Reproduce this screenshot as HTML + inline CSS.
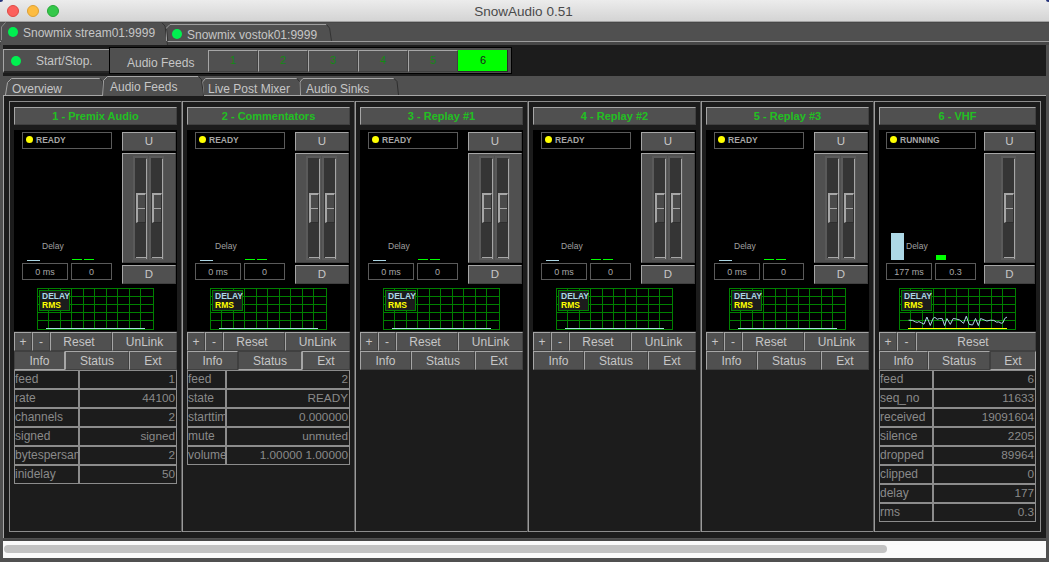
<!DOCTYPE html>
<html><head><meta charset="utf-8"><style>
html,body{margin:0;padding:0;width:1049px;height:562px;overflow:hidden;background:#505050;font-family:"Liberation Sans",sans-serif}
body>div,body>svg{position:absolute}
.t{white-space:nowrap;line-height:1.15}
</style></head><body>
<div style="left:0;top:0;width:1049px;height:22px;background:linear-gradient(#ececec,#d4d4d4);border-bottom:1px solid #a0a0a0;box-sizing:border-box"></div>
<div class="t" style="left:0px;width:1047px;text-align:center;top:4px;font-size:13.5px;color:#4a4a4a;font-weight:normal;">SnowAudio 0.51</div>
<div style="left:7px;top:5px;width:12px;height:12px;border-radius:50%;background:#fc605c;box-sizing:border-box;border:0.5px solid #de4a44"></div>
<div style="left:27px;top:5px;width:12px;height:12px;border-radius:50%;background:#fdbc40;box-sizing:border-box;border:0.5px solid #dea033"></div>
<div style="left:47px;top:5px;width:12px;height:12px;border-radius:50%;background:#34c84a;box-sizing:border-box;border:0.5px solid #27a737"></div>
<div style="left:-2px;top:-2px;width:5px;height:4px;border-radius:50%;background:#24327a;filter:blur(0.6px)"></div>
<div style="left:1046px;top:-2px;width:5px;height:4px;border-radius:50%;background:#24327a;filter:blur(0.6px)"></div>
<div style="left:0px;top:22px;width:1049px;height:1px;background:#474747"></div>
<div style="left:0px;top:41px;width:1049px;height:1px;background:#9c9c9c"></div>
<div style="left:0px;top:42px;width:1049px;height:3px;background:#474747"></div>
<div style="left:1px;top:23px;width:166px;height:22px;background:#505050"></div>
<svg width="1049" height="50" style="position:absolute;left:0;top:0"><path d="M1.5,40 L1.5,27 L5.5,22.5" fill="none" stroke="#8a8a8a" stroke-width="1"/><path d="M162,22.8 L165,26 L167.5,45" fill="none" stroke="#333" stroke-width="1"/><path d="M166.5,41 L166.5,28 L170,24.5 L326.5,24.5" fill="none" stroke="#a0a0a0" stroke-width="1"/><path d="M166.5,28.5 L167.8,41" fill="none" stroke="#333" stroke-width="1"/><path d="M326.5,24.5 L329.6,28.2 L331.5,41" fill="none" stroke="#333" stroke-width="1"/></svg>
<div style="left:172.0px;top:29.0px;width:10px;height:10px;border-radius:50%;background:#00f050"></div>
<div class="t" style="left:187px;top:29px;font-size:12px;color:#c6c6c6;font-weight:normal;">Snowmix vostok01:9999</div>
<div style="left:8.0px;top:27.0px;width:10px;height:10px;border-radius:50%;background:#00f050"></div>
<div class="t" style="left:23px;top:27px;font-size:12px;color:#c6c6c6;font-weight:normal;">Snowmix stream01:9999</div>
<div style="left:3px;top:45px;width:1043px;height:31px;background:#1c1c1c"></div>
<div style="left:3px;top:49px;width:106px;height:24px;background:#505050;border-top:1px solid #a6a6a6;border-left:1px solid #a6a6a6;border-bottom:2px solid #262626;box-sizing:border-box"></div>
<div style="left:11.0px;top:56.0px;width:10px;height:10px;border-radius:50%;background:#00f050"></div>
<div class="t" style="left:36px;top:55px;font-size:12px;color:#c6c6c6;font-weight:normal;">Start/Stop.</div>
<div style="left:109px;top:47px;width:403px;height:27px;background:#505050;border:1px solid #000;box-sizing:border-box"></div>
<div class="t" style="left:127px;top:57px;font-size:12px;color:#c6c6c6;font-weight:normal;">Audio Feeds</div>
<div style="left:208px;top:50px;width:50px;height:22px;background:#505050;border-top:1px solid #a6a6a6;border-left:1px solid #a6a6a6;border-right:1px solid #404040;border-bottom:1px solid #404040;box-sizing:border-box;"></div>
<div class="t" style="left:208px;width:50px;text-align:center;top:54px;font-size:11px;color:#138a13;font-weight:normal;">1</div>
<div style="left:258px;top:50px;width:50px;height:22px;background:#505050;border-top:1px solid #a6a6a6;border-left:1px solid #a6a6a6;border-right:1px solid #404040;border-bottom:1px solid #404040;box-sizing:border-box;"></div>
<div class="t" style="left:258px;width:50px;text-align:center;top:54px;font-size:11px;color:#138a13;font-weight:normal;">2</div>
<div style="left:308px;top:50px;width:50px;height:22px;background:#505050;border-top:1px solid #a6a6a6;border-left:1px solid #a6a6a6;border-right:1px solid #404040;border-bottom:1px solid #404040;box-sizing:border-box;"></div>
<div class="t" style="left:308px;width:50px;text-align:center;top:54px;font-size:11px;color:#138a13;font-weight:normal;">3</div>
<div style="left:358px;top:50px;width:50px;height:22px;background:#505050;border-top:1px solid #a6a6a6;border-left:1px solid #a6a6a6;border-right:1px solid #404040;border-bottom:1px solid #404040;box-sizing:border-box;"></div>
<div class="t" style="left:358px;width:50px;text-align:center;top:54px;font-size:11px;color:#138a13;font-weight:normal;">4</div>
<div style="left:408px;top:50px;width:50px;height:22px;background:#505050;border-top:1px solid #a6a6a6;border-left:1px solid #a6a6a6;border-right:1px solid #404040;border-bottom:1px solid #404040;box-sizing:border-box;"></div>
<div class="t" style="left:408px;width:50px;text-align:center;top:54px;font-size:11px;color:#138a13;font-weight:normal;">5</div>
<div style="left:458px;top:50px;width:50px;height:22px;background:#00ff00;border-bottom:1px solid #2a2a2a;border-right:1px solid #2a2a2a;box-sizing:border-box"></div>
<div class="t" style="left:458px;width:50px;text-align:center;top:54px;font-size:11px;color:#1a1a1a;font-weight:normal;">6</div>
<div style="left:3px;top:95px;width:99px;height:1px;background:#a6a6a6"></div>
<div style="left:203px;top:95px;width:843px;height:1px;background:#a6a6a6"></div>
<svg width="1049" height="100" style="position:absolute;left:0;top:0"><path d="M5.5,95 L7.5,82.5 L11.5,78.5 L100,78.5" fill="none" stroke="#a6a6a6" stroke-width="1"/><path d="M100,78.5 L102.5,81.5 L102.5,95" fill="none" stroke="#2e2e2e" stroke-width="1"/><path d="M203.5,95 L202.5,82 L205.5,78.5 L297,78.5" fill="none" stroke="#a6a6a6" stroke-width="1"/><path d="M297,78.5 L299.5,81.5 L300.5,95" fill="none" stroke="#2e2e2e" stroke-width="1"/><path d="M300.5,95 L300,82 L303,78.5 L394,78.5" fill="none" stroke="#a6a6a6" stroke-width="1"/><path d="M394,78.5 L397,81.5 L398.5,95" fill="none" stroke="#2e2e2e" stroke-width="1"/><path d="M102.5,96 L103.5,80.5 L107.5,76.5 L198.5,76.5" fill="none" stroke="#a6a6a6" stroke-width="1"/><path d="M198.5,76.5 L201.5,79.5 L203.5,96" fill="none" stroke="#2e2e2e" stroke-width="1"/></svg>
<div class="t" style="left:12px;top:83px;font-size:12px;color:#c6c6c6;font-weight:normal;">Overview</div>
<div class="t" style="left:208px;top:83px;font-size:12px;color:#c6c6c6;font-weight:normal;">Live Post Mixer</div>
<div class="t" style="left:306px;top:83px;font-size:12px;color:#c6c6c6;font-weight:normal;">Audio Sinks</div>
<div class="t" style="left:110px;top:81px;font-size:12px;color:#c6c6c6;font-weight:normal;">Audio Feeds</div>
<div style="left:3px;top:96px;width:1043px;height:442px;background:#1c1c1c;border-left:1px solid #a6a6a6;box-sizing:border-box"></div>
<div style="left:9px;top:101px;width:1032px;height:431px;border:1px solid #8c8c8c;box-sizing:border-box"></div>
<div style="left:181px;top:101px;width:1px;height:431px;background:#5a5a5a"></div>
<div style="left:182px;top:101px;width:1px;height:431px;background:#9a9a9a"></div>
<div style="left:354px;top:101px;width:1px;height:431px;background:#5a5a5a"></div>
<div style="left:355px;top:101px;width:1px;height:431px;background:#9a9a9a"></div>
<div style="left:527px;top:101px;width:1px;height:431px;background:#5a5a5a"></div>
<div style="left:528px;top:101px;width:1px;height:431px;background:#9a9a9a"></div>
<div style="left:700px;top:101px;width:1px;height:431px;background:#5a5a5a"></div>
<div style="left:701px;top:101px;width:1px;height:431px;background:#9a9a9a"></div>
<div style="left:873px;top:101px;width:1px;height:431px;background:#5a5a5a"></div>
<div style="left:874px;top:101px;width:1px;height:431px;background:#9a9a9a"></div>
<div style="left:14px;top:107px;width:163px;height:18px;background:#505050;border-top:1px solid #a6a6a6;border-left:1px solid #a6a6a6;border-right:1px solid #404040;border-bottom:1px solid #404040;box-sizing:border-box;"></div>
<div class="t" style="left:14px;width:163px;text-align:center;top:110px;font-size:11px;color:#22c022;font-weight:bold;">1 - Premix Audio</div>
<div style="left:14px;top:130px;width:163px;height:201px;background:#000"></div>
<div style="left:22px;top:132px;width:90px;height:17px;border:1px solid #5a5a5a;box-sizing:border-box"></div>
<div style="left:26.0px;top:136.3px;width:7px;height:7px;border-radius:50%;background:#ffff00"></div>
<div class="t" style="left:36px;top:136px;font-size:8.5px;color:#a6a6a6;font-weight:bold;">READY</div>
<div style="left:122px;top:132px;width:54px;height:19px;background:#505050;border-top:1px solid #a6a6a6;border-left:1px solid #a6a6a6;border-right:1px solid #404040;border-bottom:1px solid #404040;box-sizing:border-box;"></div>
<div class="t" style="left:122px;width:54px;text-align:center;top:135px;font-size:11.5px;color:#c6c6c6;font-weight:normal;">U</div>
<div style="left:122px;top:153px;width:54px;height:110px;background:#505050;border-top:1px solid #a6a6a6;border-left:1px solid #a6a6a6;border-right:1px solid #404040;border-bottom:1px solid #404040;box-sizing:border-box;"></div>
<div style="left:122px;top:265px;width:54px;height:19px;background:#505050;border-top:1px solid #a6a6a6;border-left:1px solid #a6a6a6;border-right:1px solid #404040;border-bottom:1px solid #404040;box-sizing:border-box;"></div>
<div class="t" style="left:122px;width:54px;text-align:center;top:268px;font-size:11.5px;color:#c6c6c6;font-weight:normal;">D</div>
<div style="left:133px;top:156px;width:15px;height:104px;border:2px solid #5a5a5a;box-sizing:border-box;background:#4c4c4c"></div>
<div style="left:135px;top:158px;width:11px;height:100px;background:#353535"></div>
<div style="left:146px;top:159px;width:1px;height:100px;background:#a6a6a6"></div>
<div style="left:136px;top:257px;width:11px;height:1px;background:#a6a6a6"></div>
<div style="left:136px;top:193px;width:10px;height:30px;background:#4a4a4a;border-left:2px solid #a6a6a6;border-top:2px solid #a6a6a6;border-right:1px solid #2e2e2e;border-bottom:1px solid #2e2e2e;box-sizing:border-box"></div>
<div style="left:138px;top:208px;width:7px;height:1px;background:#a6a6a6"></div>
<div style="left:149px;top:156px;width:15px;height:104px;border:2px solid #5a5a5a;box-sizing:border-box;background:#4c4c4c"></div>
<div style="left:151px;top:158px;width:11px;height:100px;background:#353535"></div>
<div style="left:162px;top:159px;width:1px;height:100px;background:#a6a6a6"></div>
<div style="left:152px;top:257px;width:11px;height:1px;background:#a6a6a6"></div>
<div style="left:152px;top:193px;width:10px;height:30px;background:#4a4a4a;border-left:2px solid #a6a6a6;border-top:2px solid #a6a6a6;border-right:1px solid #2e2e2e;border-bottom:1px solid #2e2e2e;box-sizing:border-box"></div>
<div style="left:154px;top:208px;width:7px;height:1px;background:#a6a6a6"></div>
<div class="t" style="left:42px;top:242px;font-size:8.5px;color:#a0a0a0;font-weight:normal;">Delay</div>
<div style="left:22px;top:263px;width:46px;height:17px;border:1px solid #5a5a5a;box-sizing:border-box"></div>
<div class="t" style="left:22px;width:46px;text-align:center;top:267px;font-size:9px;color:#a8a8a8;font-weight:normal;">0 ms</div>
<div style="left:71px;top:263px;width:41px;height:17px;border:1px solid #5a5a5a;box-sizing:border-box"></div>
<div class="t" style="left:71px;width:41px;text-align:center;top:267px;font-size:9px;color:#a8a8a8;font-weight:normal;">0</div>
<div style="left:27px;top:260px;width:13px;height:1px;background:#add8e6"></div>
<div style="left:72px;top:259px;width:10px;height:1px;background:#00ff00"></div>
<div style="left:84px;top:259px;width:10px;height:1px;background:#00ff00"></div>
<svg width="1049" height="562" style="position:absolute;left:0;top:0" shape-rendering="crispEdges"><rect x="37" y="288" width="1" height="42" fill="#008000"/><rect x="48" y="288" width="1" height="42" fill="#008000"/><rect x="60" y="288" width="1" height="42" fill="#008000"/><rect x="71" y="288" width="1" height="42" fill="#008000"/><rect x="83" y="288" width="1" height="42" fill="#008000"/><rect x="94" y="288" width="1" height="42" fill="#008000"/><rect x="106" y="288" width="1" height="42" fill="#008000"/><rect x="117" y="288" width="1" height="42" fill="#008000"/><rect x="129" y="288" width="1" height="42" fill="#008000"/><rect x="140" y="288" width="1" height="42" fill="#008000"/><rect x="153" y="288" width="1" height="42" fill="#008000"/><rect x="37" y="288" width="117" height="1" fill="#008000"/><rect x="37" y="296" width="117" height="1" fill="#008000"/><rect x="37" y="304" width="117" height="1" fill="#008000"/><rect x="37" y="312" width="117" height="1" fill="#008000"/><rect x="37" y="320" width="117" height="1" fill="#008000"/><rect x="37" y="329" width="117" height="1" fill="#008000"/><rect x="39" y="290" width="31" height="21" fill="#1c1c1c"/><rect x="39" y="290" width="31" height="1" fill="#008000"/><rect x="39" y="290" width="1" height="21" fill="#008000"/><rect x="69" y="290" width="1" height="21" fill="#008000"/><rect x="39" y="310" width="31" height="1" fill="#008000"/><rect x="46" y="328" width="99" height="1" fill="#add8e6"/></svg>
<div class="t" style="left:42px;top:292px;font-size:8.5px;color:#add8e6;font-weight:bold;">DELAY</div>
<div class="t" style="left:42px;top:301px;font-size:8.5px;color:#ffff00;font-weight:bold;">RMS</div>
<div style="left:14px;top:332px;width:18px;height:19px;background:#505050;border-top:1px solid #a6a6a6;border-left:1px solid #a6a6a6;border-right:1px solid #404040;border-bottom:1px solid #404040;box-sizing:border-box;"></div>
<div class="t" style="left:14px;width:18px;text-align:center;top:336px;font-size:12px;color:#c6c6c6;font-weight:normal;">+</div>
<div style="left:32px;top:332px;width:18px;height:19px;background:#505050;border-top:1px solid #a6a6a6;border-left:1px solid #a6a6a6;border-right:1px solid #404040;border-bottom:1px solid #404040;box-sizing:border-box;"></div>
<div class="t" style="left:32px;width:18px;text-align:center;top:336px;font-size:12px;color:#c6c6c6;font-weight:normal;">-</div>
<div style="left:50px;top:332px;width:62px;height:19px;background:#505050;border-top:1px solid #a6a6a6;border-left:1px solid #a6a6a6;border-right:1px solid #404040;border-bottom:1px solid #404040;box-sizing:border-box;"></div>
<div class="t" style="left:48px;width:62px;text-align:center;top:336px;font-size:12px;color:#c6c6c6;font-weight:normal;">Reset</div>
<div style="left:112px;top:332px;width:65px;height:19px;background:#505050;border-top:1px solid #a6a6a6;border-left:1px solid #a6a6a6;border-right:1px solid #404040;border-bottom:1px solid #404040;box-sizing:border-box;"></div>
<div class="t" style="left:112px;width:65px;text-align:center;top:336px;font-size:12px;color:#c6c6c6;font-weight:normal;">UnLink</div>
<div style="left:14px;top:351px;width:51px;height:19px;background:#505050;border-bottom:1px solid #a6a6a6;border-right:1px solid #a6a6a6;border-top:1px solid #404040;border-left:1px solid #404040;box-sizing:border-box;"></div>
<div class="t" style="left:14px;width:51px;text-align:center;top:355px;font-size:12px;color:#c6c6c6;font-weight:normal;">Info</div>
<div style="left:65px;top:351px;width:64px;height:19px;background:#505050;border-top:1px solid #a6a6a6;border-left:1px solid #a6a6a6;border-right:1px solid #404040;border-bottom:1px solid #404040;box-sizing:border-box;"></div>
<div class="t" style="left:65px;width:64px;text-align:center;top:355px;font-size:12px;color:#c6c6c6;font-weight:normal;">Status</div>
<div style="left:129px;top:351px;width:48px;height:19px;background:#505050;border-top:1px solid #a6a6a6;border-left:1px solid #a6a6a6;border-right:1px solid #404040;border-bottom:1px solid #404040;box-sizing:border-box;"></div>
<div class="t" style="left:129px;width:48px;text-align:center;top:355px;font-size:12px;color:#c6c6c6;font-weight:normal;">Ext</div>
<div style="left:14px;top:370px;width:65px;height:19px;background:#1c1c1c;border:1px solid #8c8c8c;box-sizing:border-box"></div>
<div class="t" style="left:15px;top:373px;width:63px;overflow:hidden;font-size:12px;color:#8a8a8a">feed</div>
<div style="left:79px;top:370px;width:98px;height:19px;background:#1c1c1c;border:1px solid #8c8c8c;box-sizing:border-box"></div>
<div class="t" style="right:874px;top:372px;font-size:11.75px;color:#8a8a8a;font-weight:normal;">1</div>
<div style="left:14px;top:389px;width:65px;height:19px;background:#1c1c1c;border:1px solid #8c8c8c;box-sizing:border-box"></div>
<div class="t" style="left:15px;top:392px;width:63px;overflow:hidden;font-size:12px;color:#8a8a8a">rate</div>
<div style="left:79px;top:389px;width:98px;height:19px;background:#1c1c1c;border:1px solid #8c8c8c;box-sizing:border-box"></div>
<div class="t" style="right:874px;top:391px;font-size:11.75px;color:#8a8a8a;font-weight:normal;">44100</div>
<div style="left:14px;top:408px;width:65px;height:19px;background:#1c1c1c;border:1px solid #8c8c8c;box-sizing:border-box"></div>
<div class="t" style="left:15px;top:411px;width:63px;overflow:hidden;font-size:12px;color:#8a8a8a">channels</div>
<div style="left:79px;top:408px;width:98px;height:19px;background:#1c1c1c;border:1px solid #8c8c8c;box-sizing:border-box"></div>
<div class="t" style="right:874px;top:410px;font-size:11.75px;color:#8a8a8a;font-weight:normal;">2</div>
<div style="left:14px;top:427px;width:65px;height:19px;background:#1c1c1c;border:1px solid #8c8c8c;box-sizing:border-box"></div>
<div class="t" style="left:15px;top:430px;width:63px;overflow:hidden;font-size:12px;color:#8a8a8a">signed</div>
<div style="left:79px;top:427px;width:98px;height:19px;background:#1c1c1c;border:1px solid #8c8c8c;box-sizing:border-box"></div>
<div class="t" style="right:874px;top:429px;font-size:11.75px;color:#8a8a8a;font-weight:normal;">signed</div>
<div style="left:14px;top:446px;width:65px;height:19px;background:#1c1c1c;border:1px solid #8c8c8c;box-sizing:border-box"></div>
<div class="t" style="left:15px;top:449px;width:63px;overflow:hidden;font-size:12px;color:#8a8a8a">bytespersample</div>
<div style="left:79px;top:446px;width:98px;height:19px;background:#1c1c1c;border:1px solid #8c8c8c;box-sizing:border-box"></div>
<div class="t" style="right:874px;top:448px;font-size:11.75px;color:#8a8a8a;font-weight:normal;">2</div>
<div style="left:14px;top:465px;width:65px;height:19px;background:#1c1c1c;border:1px solid #8c8c8c;box-sizing:border-box"></div>
<div class="t" style="left:15px;top:468px;width:63px;overflow:hidden;font-size:12px;color:#8a8a8a">inidelay</div>
<div style="left:79px;top:465px;width:98px;height:19px;background:#1c1c1c;border:1px solid #8c8c8c;box-sizing:border-box"></div>
<div class="t" style="right:874px;top:467px;font-size:11.75px;color:#8a8a8a;font-weight:normal;">50</div>
<div style="left:187px;top:107px;width:163px;height:18px;background:#505050;border-top:1px solid #a6a6a6;border-left:1px solid #a6a6a6;border-right:1px solid #404040;border-bottom:1px solid #404040;box-sizing:border-box;"></div>
<div class="t" style="left:187px;width:163px;text-align:center;top:110px;font-size:11px;color:#22c022;font-weight:bold;">2 - Commentators</div>
<div style="left:187px;top:130px;width:163px;height:201px;background:#000"></div>
<div style="left:195px;top:132px;width:90px;height:17px;border:1px solid #5a5a5a;box-sizing:border-box"></div>
<div style="left:199.0px;top:136.3px;width:7px;height:7px;border-radius:50%;background:#ffff00"></div>
<div class="t" style="left:209px;top:136px;font-size:8.5px;color:#a6a6a6;font-weight:bold;">READY</div>
<div style="left:295px;top:132px;width:54px;height:19px;background:#505050;border-top:1px solid #a6a6a6;border-left:1px solid #a6a6a6;border-right:1px solid #404040;border-bottom:1px solid #404040;box-sizing:border-box;"></div>
<div class="t" style="left:295px;width:54px;text-align:center;top:135px;font-size:11.5px;color:#c6c6c6;font-weight:normal;">U</div>
<div style="left:295px;top:153px;width:54px;height:110px;background:#505050;border-top:1px solid #a6a6a6;border-left:1px solid #a6a6a6;border-right:1px solid #404040;border-bottom:1px solid #404040;box-sizing:border-box;"></div>
<div style="left:295px;top:265px;width:54px;height:19px;background:#505050;border-top:1px solid #a6a6a6;border-left:1px solid #a6a6a6;border-right:1px solid #404040;border-bottom:1px solid #404040;box-sizing:border-box;"></div>
<div class="t" style="left:295px;width:54px;text-align:center;top:268px;font-size:11.5px;color:#c6c6c6;font-weight:normal;">D</div>
<div style="left:306px;top:156px;width:15px;height:104px;border:2px solid #5a5a5a;box-sizing:border-box;background:#4c4c4c"></div>
<div style="left:308px;top:158px;width:11px;height:100px;background:#353535"></div>
<div style="left:319px;top:159px;width:1px;height:100px;background:#a6a6a6"></div>
<div style="left:309px;top:257px;width:11px;height:1px;background:#a6a6a6"></div>
<div style="left:309px;top:193px;width:10px;height:30px;background:#4a4a4a;border-left:2px solid #a6a6a6;border-top:2px solid #a6a6a6;border-right:1px solid #2e2e2e;border-bottom:1px solid #2e2e2e;box-sizing:border-box"></div>
<div style="left:311px;top:208px;width:7px;height:1px;background:#a6a6a6"></div>
<div style="left:322px;top:156px;width:15px;height:104px;border:2px solid #5a5a5a;box-sizing:border-box;background:#4c4c4c"></div>
<div style="left:324px;top:158px;width:11px;height:100px;background:#353535"></div>
<div style="left:335px;top:159px;width:1px;height:100px;background:#a6a6a6"></div>
<div style="left:325px;top:257px;width:11px;height:1px;background:#a6a6a6"></div>
<div style="left:325px;top:193px;width:10px;height:30px;background:#4a4a4a;border-left:2px solid #a6a6a6;border-top:2px solid #a6a6a6;border-right:1px solid #2e2e2e;border-bottom:1px solid #2e2e2e;box-sizing:border-box"></div>
<div style="left:327px;top:208px;width:7px;height:1px;background:#a6a6a6"></div>
<div class="t" style="left:215px;top:242px;font-size:8.5px;color:#a0a0a0;font-weight:normal;">Delay</div>
<div style="left:195px;top:263px;width:46px;height:17px;border:1px solid #5a5a5a;box-sizing:border-box"></div>
<div class="t" style="left:195px;width:46px;text-align:center;top:267px;font-size:9px;color:#a8a8a8;font-weight:normal;">0 ms</div>
<div style="left:244px;top:263px;width:41px;height:17px;border:1px solid #5a5a5a;box-sizing:border-box"></div>
<div class="t" style="left:244px;width:41px;text-align:center;top:267px;font-size:9px;color:#a8a8a8;font-weight:normal;">0</div>
<div style="left:200px;top:260px;width:13px;height:1px;background:#add8e6"></div>
<div style="left:245px;top:259px;width:10px;height:1px;background:#00ff00"></div>
<div style="left:257px;top:259px;width:10px;height:1px;background:#00ff00"></div>
<svg width="1049" height="562" style="position:absolute;left:0;top:0" shape-rendering="crispEdges"><rect x="210" y="288" width="1" height="42" fill="#008000"/><rect x="221" y="288" width="1" height="42" fill="#008000"/><rect x="233" y="288" width="1" height="42" fill="#008000"/><rect x="244" y="288" width="1" height="42" fill="#008000"/><rect x="256" y="288" width="1" height="42" fill="#008000"/><rect x="267" y="288" width="1" height="42" fill="#008000"/><rect x="279" y="288" width="1" height="42" fill="#008000"/><rect x="290" y="288" width="1" height="42" fill="#008000"/><rect x="302" y="288" width="1" height="42" fill="#008000"/><rect x="313" y="288" width="1" height="42" fill="#008000"/><rect x="326" y="288" width="1" height="42" fill="#008000"/><rect x="210" y="288" width="117" height="1" fill="#008000"/><rect x="210" y="296" width="117" height="1" fill="#008000"/><rect x="210" y="304" width="117" height="1" fill="#008000"/><rect x="210" y="312" width="117" height="1" fill="#008000"/><rect x="210" y="320" width="117" height="1" fill="#008000"/><rect x="210" y="329" width="117" height="1" fill="#008000"/><rect x="212" y="290" width="31" height="21" fill="#1c1c1c"/><rect x="212" y="290" width="31" height="1" fill="#008000"/><rect x="212" y="290" width="1" height="21" fill="#008000"/><rect x="242" y="290" width="1" height="21" fill="#008000"/><rect x="212" y="310" width="31" height="1" fill="#008000"/><rect x="219" y="328" width="99" height="1" fill="#add8e6"/></svg>
<div class="t" style="left:215px;top:292px;font-size:8.5px;color:#add8e6;font-weight:bold;">DELAY</div>
<div class="t" style="left:215px;top:301px;font-size:8.5px;color:#ffff00;font-weight:bold;">RMS</div>
<div style="left:187px;top:332px;width:18px;height:19px;background:#505050;border-top:1px solid #a6a6a6;border-left:1px solid #a6a6a6;border-right:1px solid #404040;border-bottom:1px solid #404040;box-sizing:border-box;"></div>
<div class="t" style="left:187px;width:18px;text-align:center;top:336px;font-size:12px;color:#c6c6c6;font-weight:normal;">+</div>
<div style="left:205px;top:332px;width:18px;height:19px;background:#505050;border-top:1px solid #a6a6a6;border-left:1px solid #a6a6a6;border-right:1px solid #404040;border-bottom:1px solid #404040;box-sizing:border-box;"></div>
<div class="t" style="left:205px;width:18px;text-align:center;top:336px;font-size:12px;color:#c6c6c6;font-weight:normal;">-</div>
<div style="left:223px;top:332px;width:62px;height:19px;background:#505050;border-top:1px solid #a6a6a6;border-left:1px solid #a6a6a6;border-right:1px solid #404040;border-bottom:1px solid #404040;box-sizing:border-box;"></div>
<div class="t" style="left:221px;width:62px;text-align:center;top:336px;font-size:12px;color:#c6c6c6;font-weight:normal;">Reset</div>
<div style="left:285px;top:332px;width:65px;height:19px;background:#505050;border-top:1px solid #a6a6a6;border-left:1px solid #a6a6a6;border-right:1px solid #404040;border-bottom:1px solid #404040;box-sizing:border-box;"></div>
<div class="t" style="left:285px;width:65px;text-align:center;top:336px;font-size:12px;color:#c6c6c6;font-weight:normal;">UnLink</div>
<div style="left:187px;top:351px;width:51px;height:19px;background:#505050;border-top:1px solid #a6a6a6;border-left:1px solid #a6a6a6;border-right:1px solid #404040;border-bottom:1px solid #404040;box-sizing:border-box;"></div>
<div class="t" style="left:187px;width:51px;text-align:center;top:355px;font-size:12px;color:#c6c6c6;font-weight:normal;">Info</div>
<div style="left:238px;top:351px;width:64px;height:19px;background:#505050;border-bottom:1px solid #a6a6a6;border-right:1px solid #a6a6a6;border-top:1px solid #404040;border-left:1px solid #404040;box-sizing:border-box;"></div>
<div class="t" style="left:238px;width:64px;text-align:center;top:355px;font-size:12px;color:#c6c6c6;font-weight:normal;">Status</div>
<div style="left:302px;top:351px;width:48px;height:19px;background:#505050;border-top:1px solid #a6a6a6;border-left:1px solid #a6a6a6;border-right:1px solid #404040;border-bottom:1px solid #404040;box-sizing:border-box;"></div>
<div class="t" style="left:302px;width:48px;text-align:center;top:355px;font-size:12px;color:#c6c6c6;font-weight:normal;">Ext</div>
<div style="left:187px;top:370px;width:39px;height:19px;background:#1c1c1c;border:1px solid #8c8c8c;box-sizing:border-box"></div>
<div class="t" style="left:188px;top:373px;width:37px;overflow:hidden;font-size:12px;color:#8a8a8a">feed</div>
<div style="left:226px;top:370px;width:124px;height:19px;background:#1c1c1c;border:1px solid #8c8c8c;box-sizing:border-box"></div>
<div class="t" style="right:701px;top:372px;font-size:11.75px;color:#8a8a8a;font-weight:normal;">2</div>
<div style="left:187px;top:389px;width:39px;height:19px;background:#1c1c1c;border:1px solid #8c8c8c;box-sizing:border-box"></div>
<div class="t" style="left:188px;top:392px;width:37px;overflow:hidden;font-size:12px;color:#8a8a8a">state</div>
<div style="left:226px;top:389px;width:124px;height:19px;background:#1c1c1c;border:1px solid #8c8c8c;box-sizing:border-box"></div>
<div class="t" style="right:701px;top:391px;font-size:11.75px;color:#8a8a8a;font-weight:normal;">READY</div>
<div style="left:187px;top:408px;width:39px;height:19px;background:#1c1c1c;border:1px solid #8c8c8c;box-sizing:border-box"></div>
<div class="t" style="left:188px;top:411px;width:37px;overflow:hidden;font-size:12px;color:#8a8a8a">starttime</div>
<div style="left:226px;top:408px;width:124px;height:19px;background:#1c1c1c;border:1px solid #8c8c8c;box-sizing:border-box"></div>
<div class="t" style="right:701px;top:410px;font-size:11.75px;color:#8a8a8a;font-weight:normal;">0.000000</div>
<div style="left:187px;top:427px;width:39px;height:19px;background:#1c1c1c;border:1px solid #8c8c8c;box-sizing:border-box"></div>
<div class="t" style="left:188px;top:430px;width:37px;overflow:hidden;font-size:12px;color:#8a8a8a">mute</div>
<div style="left:226px;top:427px;width:124px;height:19px;background:#1c1c1c;border:1px solid #8c8c8c;box-sizing:border-box"></div>
<div class="t" style="right:701px;top:429px;font-size:11.75px;color:#8a8a8a;font-weight:normal;">unmuted</div>
<div style="left:187px;top:446px;width:39px;height:19px;background:#1c1c1c;border:1px solid #8c8c8c;box-sizing:border-box"></div>
<div class="t" style="left:188px;top:449px;width:37px;overflow:hidden;font-size:12px;color:#8a8a8a">volume</div>
<div style="left:226px;top:446px;width:124px;height:19px;background:#1c1c1c;border:1px solid #8c8c8c;box-sizing:border-box"></div>
<div class="t" style="right:701px;top:448px;font-size:11.75px;color:#8a8a8a;font-weight:normal;">1.00000 1.00000</div>
<div style="left:360px;top:107px;width:163px;height:18px;background:#505050;border-top:1px solid #a6a6a6;border-left:1px solid #a6a6a6;border-right:1px solid #404040;border-bottom:1px solid #404040;box-sizing:border-box;"></div>
<div class="t" style="left:360px;width:163px;text-align:center;top:110px;font-size:11px;color:#22c022;font-weight:bold;">3 - Replay #1</div>
<div style="left:360px;top:130px;width:163px;height:201px;background:#000"></div>
<div style="left:368px;top:132px;width:90px;height:17px;border:1px solid #5a5a5a;box-sizing:border-box"></div>
<div style="left:372.0px;top:136.3px;width:7px;height:7px;border-radius:50%;background:#ffff00"></div>
<div class="t" style="left:382px;top:136px;font-size:8.5px;color:#a6a6a6;font-weight:bold;">READY</div>
<div style="left:468px;top:132px;width:54px;height:19px;background:#505050;border-top:1px solid #a6a6a6;border-left:1px solid #a6a6a6;border-right:1px solid #404040;border-bottom:1px solid #404040;box-sizing:border-box;"></div>
<div class="t" style="left:468px;width:54px;text-align:center;top:135px;font-size:11.5px;color:#c6c6c6;font-weight:normal;">U</div>
<div style="left:468px;top:153px;width:54px;height:110px;background:#505050;border-top:1px solid #a6a6a6;border-left:1px solid #a6a6a6;border-right:1px solid #404040;border-bottom:1px solid #404040;box-sizing:border-box;"></div>
<div style="left:468px;top:265px;width:54px;height:19px;background:#505050;border-top:1px solid #a6a6a6;border-left:1px solid #a6a6a6;border-right:1px solid #404040;border-bottom:1px solid #404040;box-sizing:border-box;"></div>
<div class="t" style="left:468px;width:54px;text-align:center;top:268px;font-size:11.5px;color:#c6c6c6;font-weight:normal;">D</div>
<div style="left:479px;top:156px;width:15px;height:104px;border:2px solid #5a5a5a;box-sizing:border-box;background:#4c4c4c"></div>
<div style="left:481px;top:158px;width:11px;height:100px;background:#353535"></div>
<div style="left:492px;top:159px;width:1px;height:100px;background:#a6a6a6"></div>
<div style="left:482px;top:257px;width:11px;height:1px;background:#a6a6a6"></div>
<div style="left:482px;top:193px;width:10px;height:30px;background:#4a4a4a;border-left:2px solid #a6a6a6;border-top:2px solid #a6a6a6;border-right:1px solid #2e2e2e;border-bottom:1px solid #2e2e2e;box-sizing:border-box"></div>
<div style="left:484px;top:208px;width:7px;height:1px;background:#a6a6a6"></div>
<div style="left:495px;top:156px;width:15px;height:104px;border:2px solid #5a5a5a;box-sizing:border-box;background:#4c4c4c"></div>
<div style="left:497px;top:158px;width:11px;height:100px;background:#353535"></div>
<div style="left:508px;top:159px;width:1px;height:100px;background:#a6a6a6"></div>
<div style="left:498px;top:257px;width:11px;height:1px;background:#a6a6a6"></div>
<div style="left:498px;top:193px;width:10px;height:30px;background:#4a4a4a;border-left:2px solid #a6a6a6;border-top:2px solid #a6a6a6;border-right:1px solid #2e2e2e;border-bottom:1px solid #2e2e2e;box-sizing:border-box"></div>
<div style="left:500px;top:208px;width:7px;height:1px;background:#a6a6a6"></div>
<div class="t" style="left:388px;top:242px;font-size:8.5px;color:#a0a0a0;font-weight:normal;">Delay</div>
<div style="left:368px;top:263px;width:46px;height:17px;border:1px solid #5a5a5a;box-sizing:border-box"></div>
<div class="t" style="left:368px;width:46px;text-align:center;top:267px;font-size:9px;color:#a8a8a8;font-weight:normal;">0 ms</div>
<div style="left:417px;top:263px;width:41px;height:17px;border:1px solid #5a5a5a;box-sizing:border-box"></div>
<div class="t" style="left:417px;width:41px;text-align:center;top:267px;font-size:9px;color:#a8a8a8;font-weight:normal;">0</div>
<div style="left:373px;top:260px;width:13px;height:1px;background:#add8e6"></div>
<div style="left:418px;top:259px;width:10px;height:1px;background:#00ff00"></div>
<div style="left:430px;top:259px;width:10px;height:1px;background:#00ff00"></div>
<svg width="1049" height="562" style="position:absolute;left:0;top:0" shape-rendering="crispEdges"><rect x="383" y="288" width="1" height="42" fill="#008000"/><rect x="394" y="288" width="1" height="42" fill="#008000"/><rect x="406" y="288" width="1" height="42" fill="#008000"/><rect x="417" y="288" width="1" height="42" fill="#008000"/><rect x="429" y="288" width="1" height="42" fill="#008000"/><rect x="440" y="288" width="1" height="42" fill="#008000"/><rect x="452" y="288" width="1" height="42" fill="#008000"/><rect x="463" y="288" width="1" height="42" fill="#008000"/><rect x="475" y="288" width="1" height="42" fill="#008000"/><rect x="486" y="288" width="1" height="42" fill="#008000"/><rect x="499" y="288" width="1" height="42" fill="#008000"/><rect x="383" y="288" width="117" height="1" fill="#008000"/><rect x="383" y="296" width="117" height="1" fill="#008000"/><rect x="383" y="304" width="117" height="1" fill="#008000"/><rect x="383" y="312" width="117" height="1" fill="#008000"/><rect x="383" y="320" width="117" height="1" fill="#008000"/><rect x="383" y="329" width="117" height="1" fill="#008000"/><rect x="385" y="290" width="31" height="21" fill="#1c1c1c"/><rect x="385" y="290" width="31" height="1" fill="#008000"/><rect x="385" y="290" width="1" height="21" fill="#008000"/><rect x="415" y="290" width="1" height="21" fill="#008000"/><rect x="385" y="310" width="31" height="1" fill="#008000"/><rect x="392" y="328" width="99" height="1" fill="#add8e6"/></svg>
<div class="t" style="left:388px;top:292px;font-size:8.5px;color:#add8e6;font-weight:bold;">DELAY</div>
<div class="t" style="left:388px;top:301px;font-size:8.5px;color:#ffff00;font-weight:bold;">RMS</div>
<div style="left:360px;top:332px;width:18px;height:19px;background:#505050;border-top:1px solid #a6a6a6;border-left:1px solid #a6a6a6;border-right:1px solid #404040;border-bottom:1px solid #404040;box-sizing:border-box;"></div>
<div class="t" style="left:360px;width:18px;text-align:center;top:336px;font-size:12px;color:#c6c6c6;font-weight:normal;">+</div>
<div style="left:378px;top:332px;width:18px;height:19px;background:#505050;border-top:1px solid #a6a6a6;border-left:1px solid #a6a6a6;border-right:1px solid #404040;border-bottom:1px solid #404040;box-sizing:border-box;"></div>
<div class="t" style="left:378px;width:18px;text-align:center;top:336px;font-size:12px;color:#c6c6c6;font-weight:normal;">-</div>
<div style="left:396px;top:332px;width:62px;height:19px;background:#505050;border-top:1px solid #a6a6a6;border-left:1px solid #a6a6a6;border-right:1px solid #404040;border-bottom:1px solid #404040;box-sizing:border-box;"></div>
<div class="t" style="left:394px;width:62px;text-align:center;top:336px;font-size:12px;color:#c6c6c6;font-weight:normal;">Reset</div>
<div style="left:458px;top:332px;width:65px;height:19px;background:#505050;border-top:1px solid #a6a6a6;border-left:1px solid #a6a6a6;border-right:1px solid #404040;border-bottom:1px solid #404040;box-sizing:border-box;"></div>
<div class="t" style="left:458px;width:65px;text-align:center;top:336px;font-size:12px;color:#c6c6c6;font-weight:normal;">UnLink</div>
<div style="left:360px;top:351px;width:51px;height:19px;background:#505050;border-top:1px solid #a6a6a6;border-left:1px solid #a6a6a6;border-right:1px solid #404040;border-bottom:1px solid #404040;box-sizing:border-box;"></div>
<div class="t" style="left:360px;width:51px;text-align:center;top:355px;font-size:12px;color:#c6c6c6;font-weight:normal;">Info</div>
<div style="left:411px;top:351px;width:64px;height:19px;background:#505050;border-top:1px solid #a6a6a6;border-left:1px solid #a6a6a6;border-right:1px solid #404040;border-bottom:1px solid #404040;box-sizing:border-box;"></div>
<div class="t" style="left:411px;width:64px;text-align:center;top:355px;font-size:12px;color:#c6c6c6;font-weight:normal;">Status</div>
<div style="left:475px;top:351px;width:48px;height:19px;background:#505050;border-top:1px solid #a6a6a6;border-left:1px solid #a6a6a6;border-right:1px solid #404040;border-bottom:1px solid #404040;box-sizing:border-box;"></div>
<div class="t" style="left:475px;width:48px;text-align:center;top:355px;font-size:12px;color:#c6c6c6;font-weight:normal;">Ext</div>
<div style="left:533px;top:107px;width:163px;height:18px;background:#505050;border-top:1px solid #a6a6a6;border-left:1px solid #a6a6a6;border-right:1px solid #404040;border-bottom:1px solid #404040;box-sizing:border-box;"></div>
<div class="t" style="left:533px;width:163px;text-align:center;top:110px;font-size:11px;color:#22c022;font-weight:bold;">4 - Replay #2</div>
<div style="left:533px;top:130px;width:163px;height:201px;background:#000"></div>
<div style="left:541px;top:132px;width:90px;height:17px;border:1px solid #5a5a5a;box-sizing:border-box"></div>
<div style="left:545.0px;top:136.3px;width:7px;height:7px;border-radius:50%;background:#ffff00"></div>
<div class="t" style="left:555px;top:136px;font-size:8.5px;color:#a6a6a6;font-weight:bold;">READY</div>
<div style="left:641px;top:132px;width:54px;height:19px;background:#505050;border-top:1px solid #a6a6a6;border-left:1px solid #a6a6a6;border-right:1px solid #404040;border-bottom:1px solid #404040;box-sizing:border-box;"></div>
<div class="t" style="left:641px;width:54px;text-align:center;top:135px;font-size:11.5px;color:#c6c6c6;font-weight:normal;">U</div>
<div style="left:641px;top:153px;width:54px;height:110px;background:#505050;border-top:1px solid #a6a6a6;border-left:1px solid #a6a6a6;border-right:1px solid #404040;border-bottom:1px solid #404040;box-sizing:border-box;"></div>
<div style="left:641px;top:265px;width:54px;height:19px;background:#505050;border-top:1px solid #a6a6a6;border-left:1px solid #a6a6a6;border-right:1px solid #404040;border-bottom:1px solid #404040;box-sizing:border-box;"></div>
<div class="t" style="left:641px;width:54px;text-align:center;top:268px;font-size:11.5px;color:#c6c6c6;font-weight:normal;">D</div>
<div style="left:652px;top:156px;width:15px;height:104px;border:2px solid #5a5a5a;box-sizing:border-box;background:#4c4c4c"></div>
<div style="left:654px;top:158px;width:11px;height:100px;background:#353535"></div>
<div style="left:665px;top:159px;width:1px;height:100px;background:#a6a6a6"></div>
<div style="left:655px;top:257px;width:11px;height:1px;background:#a6a6a6"></div>
<div style="left:655px;top:193px;width:10px;height:30px;background:#4a4a4a;border-left:2px solid #a6a6a6;border-top:2px solid #a6a6a6;border-right:1px solid #2e2e2e;border-bottom:1px solid #2e2e2e;box-sizing:border-box"></div>
<div style="left:657px;top:208px;width:7px;height:1px;background:#a6a6a6"></div>
<div style="left:668px;top:156px;width:15px;height:104px;border:2px solid #5a5a5a;box-sizing:border-box;background:#4c4c4c"></div>
<div style="left:670px;top:158px;width:11px;height:100px;background:#353535"></div>
<div style="left:681px;top:159px;width:1px;height:100px;background:#a6a6a6"></div>
<div style="left:671px;top:257px;width:11px;height:1px;background:#a6a6a6"></div>
<div style="left:671px;top:193px;width:10px;height:30px;background:#4a4a4a;border-left:2px solid #a6a6a6;border-top:2px solid #a6a6a6;border-right:1px solid #2e2e2e;border-bottom:1px solid #2e2e2e;box-sizing:border-box"></div>
<div style="left:673px;top:208px;width:7px;height:1px;background:#a6a6a6"></div>
<div class="t" style="left:561px;top:242px;font-size:8.5px;color:#a0a0a0;font-weight:normal;">Delay</div>
<div style="left:541px;top:263px;width:46px;height:17px;border:1px solid #5a5a5a;box-sizing:border-box"></div>
<div class="t" style="left:541px;width:46px;text-align:center;top:267px;font-size:9px;color:#a8a8a8;font-weight:normal;">0 ms</div>
<div style="left:590px;top:263px;width:41px;height:17px;border:1px solid #5a5a5a;box-sizing:border-box"></div>
<div class="t" style="left:590px;width:41px;text-align:center;top:267px;font-size:9px;color:#a8a8a8;font-weight:normal;">0</div>
<div style="left:546px;top:260px;width:13px;height:1px;background:#add8e6"></div>
<div style="left:591px;top:259px;width:10px;height:1px;background:#00ff00"></div>
<div style="left:603px;top:259px;width:10px;height:1px;background:#00ff00"></div>
<svg width="1049" height="562" style="position:absolute;left:0;top:0" shape-rendering="crispEdges"><rect x="556" y="288" width="1" height="42" fill="#008000"/><rect x="567" y="288" width="1" height="42" fill="#008000"/><rect x="579" y="288" width="1" height="42" fill="#008000"/><rect x="590" y="288" width="1" height="42" fill="#008000"/><rect x="602" y="288" width="1" height="42" fill="#008000"/><rect x="613" y="288" width="1" height="42" fill="#008000"/><rect x="625" y="288" width="1" height="42" fill="#008000"/><rect x="636" y="288" width="1" height="42" fill="#008000"/><rect x="648" y="288" width="1" height="42" fill="#008000"/><rect x="659" y="288" width="1" height="42" fill="#008000"/><rect x="672" y="288" width="1" height="42" fill="#008000"/><rect x="556" y="288" width="117" height="1" fill="#008000"/><rect x="556" y="296" width="117" height="1" fill="#008000"/><rect x="556" y="304" width="117" height="1" fill="#008000"/><rect x="556" y="312" width="117" height="1" fill="#008000"/><rect x="556" y="320" width="117" height="1" fill="#008000"/><rect x="556" y="329" width="117" height="1" fill="#008000"/><rect x="558" y="290" width="31" height="21" fill="#1c1c1c"/><rect x="558" y="290" width="31" height="1" fill="#008000"/><rect x="558" y="290" width="1" height="21" fill="#008000"/><rect x="588" y="290" width="1" height="21" fill="#008000"/><rect x="558" y="310" width="31" height="1" fill="#008000"/><rect x="565" y="328" width="99" height="1" fill="#add8e6"/></svg>
<div class="t" style="left:561px;top:292px;font-size:8.5px;color:#add8e6;font-weight:bold;">DELAY</div>
<div class="t" style="left:561px;top:301px;font-size:8.5px;color:#ffff00;font-weight:bold;">RMS</div>
<div style="left:533px;top:332px;width:18px;height:19px;background:#505050;border-top:1px solid #a6a6a6;border-left:1px solid #a6a6a6;border-right:1px solid #404040;border-bottom:1px solid #404040;box-sizing:border-box;"></div>
<div class="t" style="left:533px;width:18px;text-align:center;top:336px;font-size:12px;color:#c6c6c6;font-weight:normal;">+</div>
<div style="left:551px;top:332px;width:18px;height:19px;background:#505050;border-top:1px solid #a6a6a6;border-left:1px solid #a6a6a6;border-right:1px solid #404040;border-bottom:1px solid #404040;box-sizing:border-box;"></div>
<div class="t" style="left:551px;width:18px;text-align:center;top:336px;font-size:12px;color:#c6c6c6;font-weight:normal;">-</div>
<div style="left:569px;top:332px;width:62px;height:19px;background:#505050;border-top:1px solid #a6a6a6;border-left:1px solid #a6a6a6;border-right:1px solid #404040;border-bottom:1px solid #404040;box-sizing:border-box;"></div>
<div class="t" style="left:567px;width:62px;text-align:center;top:336px;font-size:12px;color:#c6c6c6;font-weight:normal;">Reset</div>
<div style="left:631px;top:332px;width:65px;height:19px;background:#505050;border-top:1px solid #a6a6a6;border-left:1px solid #a6a6a6;border-right:1px solid #404040;border-bottom:1px solid #404040;box-sizing:border-box;"></div>
<div class="t" style="left:631px;width:65px;text-align:center;top:336px;font-size:12px;color:#c6c6c6;font-weight:normal;">UnLink</div>
<div style="left:533px;top:351px;width:51px;height:19px;background:#505050;border-top:1px solid #a6a6a6;border-left:1px solid #a6a6a6;border-right:1px solid #404040;border-bottom:1px solid #404040;box-sizing:border-box;"></div>
<div class="t" style="left:533px;width:51px;text-align:center;top:355px;font-size:12px;color:#c6c6c6;font-weight:normal;">Info</div>
<div style="left:584px;top:351px;width:64px;height:19px;background:#505050;border-top:1px solid #a6a6a6;border-left:1px solid #a6a6a6;border-right:1px solid #404040;border-bottom:1px solid #404040;box-sizing:border-box;"></div>
<div class="t" style="left:584px;width:64px;text-align:center;top:355px;font-size:12px;color:#c6c6c6;font-weight:normal;">Status</div>
<div style="left:648px;top:351px;width:48px;height:19px;background:#505050;border-top:1px solid #a6a6a6;border-left:1px solid #a6a6a6;border-right:1px solid #404040;border-bottom:1px solid #404040;box-sizing:border-box;"></div>
<div class="t" style="left:648px;width:48px;text-align:center;top:355px;font-size:12px;color:#c6c6c6;font-weight:normal;">Ext</div>
<div style="left:706px;top:107px;width:163px;height:18px;background:#505050;border-top:1px solid #a6a6a6;border-left:1px solid #a6a6a6;border-right:1px solid #404040;border-bottom:1px solid #404040;box-sizing:border-box;"></div>
<div class="t" style="left:706px;width:163px;text-align:center;top:110px;font-size:11px;color:#22c022;font-weight:bold;">5 - Replay #3</div>
<div style="left:706px;top:130px;width:163px;height:201px;background:#000"></div>
<div style="left:714px;top:132px;width:90px;height:17px;border:1px solid #5a5a5a;box-sizing:border-box"></div>
<div style="left:718.0px;top:136.3px;width:7px;height:7px;border-radius:50%;background:#ffff00"></div>
<div class="t" style="left:728px;top:136px;font-size:8.5px;color:#a6a6a6;font-weight:bold;">READY</div>
<div style="left:814px;top:132px;width:54px;height:19px;background:#505050;border-top:1px solid #a6a6a6;border-left:1px solid #a6a6a6;border-right:1px solid #404040;border-bottom:1px solid #404040;box-sizing:border-box;"></div>
<div class="t" style="left:814px;width:54px;text-align:center;top:135px;font-size:11.5px;color:#c6c6c6;font-weight:normal;">U</div>
<div style="left:814px;top:153px;width:54px;height:110px;background:#505050;border-top:1px solid #a6a6a6;border-left:1px solid #a6a6a6;border-right:1px solid #404040;border-bottom:1px solid #404040;box-sizing:border-box;"></div>
<div style="left:814px;top:265px;width:54px;height:19px;background:#505050;border-top:1px solid #a6a6a6;border-left:1px solid #a6a6a6;border-right:1px solid #404040;border-bottom:1px solid #404040;box-sizing:border-box;"></div>
<div class="t" style="left:814px;width:54px;text-align:center;top:268px;font-size:11.5px;color:#c6c6c6;font-weight:normal;">D</div>
<div style="left:825px;top:156px;width:15px;height:104px;border:2px solid #5a5a5a;box-sizing:border-box;background:#4c4c4c"></div>
<div style="left:827px;top:158px;width:11px;height:100px;background:#353535"></div>
<div style="left:838px;top:159px;width:1px;height:100px;background:#a6a6a6"></div>
<div style="left:828px;top:257px;width:11px;height:1px;background:#a6a6a6"></div>
<div style="left:828px;top:193px;width:10px;height:30px;background:#4a4a4a;border-left:2px solid #a6a6a6;border-top:2px solid #a6a6a6;border-right:1px solid #2e2e2e;border-bottom:1px solid #2e2e2e;box-sizing:border-box"></div>
<div style="left:830px;top:208px;width:7px;height:1px;background:#a6a6a6"></div>
<div style="left:841px;top:156px;width:15px;height:104px;border:2px solid #5a5a5a;box-sizing:border-box;background:#4c4c4c"></div>
<div style="left:843px;top:158px;width:11px;height:100px;background:#353535"></div>
<div style="left:854px;top:159px;width:1px;height:100px;background:#a6a6a6"></div>
<div style="left:844px;top:257px;width:11px;height:1px;background:#a6a6a6"></div>
<div style="left:844px;top:193px;width:10px;height:30px;background:#4a4a4a;border-left:2px solid #a6a6a6;border-top:2px solid #a6a6a6;border-right:1px solid #2e2e2e;border-bottom:1px solid #2e2e2e;box-sizing:border-box"></div>
<div style="left:846px;top:208px;width:7px;height:1px;background:#a6a6a6"></div>
<div class="t" style="left:734px;top:242px;font-size:8.5px;color:#a0a0a0;font-weight:normal;">Delay</div>
<div style="left:714px;top:263px;width:46px;height:17px;border:1px solid #5a5a5a;box-sizing:border-box"></div>
<div class="t" style="left:714px;width:46px;text-align:center;top:267px;font-size:9px;color:#a8a8a8;font-weight:normal;">0 ms</div>
<div style="left:763px;top:263px;width:41px;height:17px;border:1px solid #5a5a5a;box-sizing:border-box"></div>
<div class="t" style="left:763px;width:41px;text-align:center;top:267px;font-size:9px;color:#a8a8a8;font-weight:normal;">0</div>
<div style="left:719px;top:260px;width:13px;height:1px;background:#add8e6"></div>
<div style="left:764px;top:259px;width:10px;height:1px;background:#00ff00"></div>
<div style="left:776px;top:259px;width:10px;height:1px;background:#00ff00"></div>
<svg width="1049" height="562" style="position:absolute;left:0;top:0" shape-rendering="crispEdges"><rect x="729" y="288" width="1" height="42" fill="#008000"/><rect x="740" y="288" width="1" height="42" fill="#008000"/><rect x="752" y="288" width="1" height="42" fill="#008000"/><rect x="763" y="288" width="1" height="42" fill="#008000"/><rect x="775" y="288" width="1" height="42" fill="#008000"/><rect x="786" y="288" width="1" height="42" fill="#008000"/><rect x="798" y="288" width="1" height="42" fill="#008000"/><rect x="809" y="288" width="1" height="42" fill="#008000"/><rect x="821" y="288" width="1" height="42" fill="#008000"/><rect x="832" y="288" width="1" height="42" fill="#008000"/><rect x="845" y="288" width="1" height="42" fill="#008000"/><rect x="729" y="288" width="117" height="1" fill="#008000"/><rect x="729" y="296" width="117" height="1" fill="#008000"/><rect x="729" y="304" width="117" height="1" fill="#008000"/><rect x="729" y="312" width="117" height="1" fill="#008000"/><rect x="729" y="320" width="117" height="1" fill="#008000"/><rect x="729" y="329" width="117" height="1" fill="#008000"/><rect x="731" y="290" width="31" height="21" fill="#1c1c1c"/><rect x="731" y="290" width="31" height="1" fill="#008000"/><rect x="731" y="290" width="1" height="21" fill="#008000"/><rect x="761" y="290" width="1" height="21" fill="#008000"/><rect x="731" y="310" width="31" height="1" fill="#008000"/><rect x="738" y="328" width="99" height="1" fill="#add8e6"/></svg>
<div class="t" style="left:734px;top:292px;font-size:8.5px;color:#add8e6;font-weight:bold;">DELAY</div>
<div class="t" style="left:734px;top:301px;font-size:8.5px;color:#ffff00;font-weight:bold;">RMS</div>
<div style="left:706px;top:332px;width:18px;height:19px;background:#505050;border-top:1px solid #a6a6a6;border-left:1px solid #a6a6a6;border-right:1px solid #404040;border-bottom:1px solid #404040;box-sizing:border-box;"></div>
<div class="t" style="left:706px;width:18px;text-align:center;top:336px;font-size:12px;color:#c6c6c6;font-weight:normal;">+</div>
<div style="left:724px;top:332px;width:18px;height:19px;background:#505050;border-top:1px solid #a6a6a6;border-left:1px solid #a6a6a6;border-right:1px solid #404040;border-bottom:1px solid #404040;box-sizing:border-box;"></div>
<div class="t" style="left:724px;width:18px;text-align:center;top:336px;font-size:12px;color:#c6c6c6;font-weight:normal;">-</div>
<div style="left:742px;top:332px;width:62px;height:19px;background:#505050;border-top:1px solid #a6a6a6;border-left:1px solid #a6a6a6;border-right:1px solid #404040;border-bottom:1px solid #404040;box-sizing:border-box;"></div>
<div class="t" style="left:740px;width:62px;text-align:center;top:336px;font-size:12px;color:#c6c6c6;font-weight:normal;">Reset</div>
<div style="left:804px;top:332px;width:65px;height:19px;background:#505050;border-top:1px solid #a6a6a6;border-left:1px solid #a6a6a6;border-right:1px solid #404040;border-bottom:1px solid #404040;box-sizing:border-box;"></div>
<div class="t" style="left:804px;width:65px;text-align:center;top:336px;font-size:12px;color:#c6c6c6;font-weight:normal;">UnLink</div>
<div style="left:706px;top:351px;width:51px;height:19px;background:#505050;border-top:1px solid #a6a6a6;border-left:1px solid #a6a6a6;border-right:1px solid #404040;border-bottom:1px solid #404040;box-sizing:border-box;"></div>
<div class="t" style="left:706px;width:51px;text-align:center;top:355px;font-size:12px;color:#c6c6c6;font-weight:normal;">Info</div>
<div style="left:757px;top:351px;width:64px;height:19px;background:#505050;border-top:1px solid #a6a6a6;border-left:1px solid #a6a6a6;border-right:1px solid #404040;border-bottom:1px solid #404040;box-sizing:border-box;"></div>
<div class="t" style="left:757px;width:64px;text-align:center;top:355px;font-size:12px;color:#c6c6c6;font-weight:normal;">Status</div>
<div style="left:821px;top:351px;width:48px;height:19px;background:#505050;border-top:1px solid #a6a6a6;border-left:1px solid #a6a6a6;border-right:1px solid #404040;border-bottom:1px solid #404040;box-sizing:border-box;"></div>
<div class="t" style="left:821px;width:48px;text-align:center;top:355px;font-size:12px;color:#c6c6c6;font-weight:normal;">Ext</div>
<div style="left:879px;top:107px;width:157px;height:18px;background:#505050;border-top:1px solid #a6a6a6;border-left:1px solid #a6a6a6;border-right:1px solid #404040;border-bottom:1px solid #404040;box-sizing:border-box;"></div>
<div class="t" style="left:879px;width:157px;text-align:center;top:110px;font-size:11px;color:#22c022;font-weight:bold;">6 - VHF</div>
<div style="left:879px;top:130px;width:157px;height:201px;background:#000"></div>
<div style="left:886px;top:132px;width:90px;height:17px;border:1px solid #5a5a5a;box-sizing:border-box"></div>
<div style="left:890.0px;top:136.3px;width:7px;height:7px;border-radius:50%;background:#ffff00"></div>
<div class="t" style="left:900px;top:136px;font-size:8.5px;color:#a6a6a6;font-weight:bold;">RUNNING</div>
<div style="left:984px;top:132px;width:51px;height:19px;background:#505050;border-top:1px solid #a6a6a6;border-left:1px solid #a6a6a6;border-right:1px solid #404040;border-bottom:1px solid #404040;box-sizing:border-box;"></div>
<div class="t" style="left:984px;width:51px;text-align:center;top:135px;font-size:11.5px;color:#c6c6c6;font-weight:normal;">U</div>
<div style="left:984px;top:153px;width:51px;height:110px;background:#505050;border-top:1px solid #a6a6a6;border-left:1px solid #a6a6a6;border-right:1px solid #404040;border-bottom:1px solid #404040;box-sizing:border-box;"></div>
<div style="left:984px;top:265px;width:51px;height:19px;background:#505050;border-top:1px solid #a6a6a6;border-left:1px solid #a6a6a6;border-right:1px solid #404040;border-bottom:1px solid #404040;box-sizing:border-box;"></div>
<div class="t" style="left:984px;width:51px;text-align:center;top:268px;font-size:11.5px;color:#c6c6c6;font-weight:normal;">D</div>
<div style="left:1001px;top:156px;width:15px;height:104px;border:2px solid #5a5a5a;box-sizing:border-box;background:#4c4c4c"></div>
<div style="left:1003px;top:158px;width:11px;height:100px;background:#353535"></div>
<div style="left:1014px;top:159px;width:1px;height:100px;background:#a6a6a6"></div>
<div style="left:1004px;top:257px;width:11px;height:1px;background:#a6a6a6"></div>
<div style="left:1004px;top:193px;width:10px;height:30px;background:#4a4a4a;border-left:2px solid #a6a6a6;border-top:2px solid #a6a6a6;border-right:1px solid #2e2e2e;border-bottom:1px solid #2e2e2e;box-sizing:border-box"></div>
<div style="left:1006px;top:208px;width:7px;height:1px;background:#a6a6a6"></div>
<div class="t" style="left:906px;top:242px;font-size:8.5px;color:#a0a0a0;font-weight:normal;">Delay</div>
<div style="left:886px;top:263px;width:46px;height:17px;border:1px solid #5a5a5a;box-sizing:border-box"></div>
<div class="t" style="left:886px;width:46px;text-align:center;top:267px;font-size:9px;color:#a8a8a8;font-weight:normal;">177 ms</div>
<div style="left:935px;top:263px;width:41px;height:17px;border:1px solid #5a5a5a;box-sizing:border-box"></div>
<div class="t" style="left:935px;width:41px;text-align:center;top:267px;font-size:9px;color:#a8a8a8;font-weight:normal;">0.3</div>
<div style="left:891px;top:233px;width:13px;height:27px;background:#add8e6"></div>
<div style="left:936px;top:255px;width:10px;height:5px;background:#00ff00"></div>
<svg width="1049" height="562" style="position:absolute;left:0;top:0" shape-rendering="crispEdges"><rect x="899" y="288" width="1" height="42" fill="#008000"/><rect x="910" y="288" width="1" height="42" fill="#008000"/><rect x="922" y="288" width="1" height="42" fill="#008000"/><rect x="933" y="288" width="1" height="42" fill="#008000"/><rect x="945" y="288" width="1" height="42" fill="#008000"/><rect x="956" y="288" width="1" height="42" fill="#008000"/><rect x="968" y="288" width="1" height="42" fill="#008000"/><rect x="979" y="288" width="1" height="42" fill="#008000"/><rect x="991" y="288" width="1" height="42" fill="#008000"/><rect x="1002" y="288" width="1" height="42" fill="#008000"/><rect x="1015" y="288" width="1" height="42" fill="#008000"/><rect x="899" y="288" width="117" height="1" fill="#008000"/><rect x="899" y="296" width="117" height="1" fill="#008000"/><rect x="899" y="304" width="117" height="1" fill="#008000"/><rect x="899" y="312" width="117" height="1" fill="#008000"/><rect x="899" y="320" width="117" height="1" fill="#008000"/><rect x="899" y="329" width="117" height="1" fill="#008000"/><rect x="901" y="290" width="31" height="21" fill="#1c1c1c"/><rect x="901" y="290" width="31" height="1" fill="#008000"/><rect x="901" y="290" width="1" height="21" fill="#008000"/><rect x="931" y="290" width="1" height="21" fill="#008000"/><rect x="901" y="310" width="31" height="1" fill="#008000"/><rect x="908" y="328" width="99" height="1" fill="#ffff00"/></svg>
<svg width="1049" height="562" style="position:absolute;left:0;top:0"><polyline points="908.6,320.2 912.6,320.4 915.4,321.9 917.2,322.4 918.9,321.6 921.2,322.7 924.0,324.2 926.9,317.0 930.3,325.4 933.2,318.2 934.9,317.4 937.2,319.3 939.5,318.5 942.3,318.7 944.6,325.6 946.9,318.5 950.3,324.4 953.2,318.5 956.1,319.0 959.5,319.9 963.5,323.3 966.3,316.2 969.2,324.4 972.6,325.0 975.5,318.5 978.4,325.6 980.6,318.5 984.1,319.9 986.9,321.0 990.4,320.2 993.8,320.4 996.7,322.2 998.9,321.9 1001.2,323.3 1003.0,322.7 1004.7,318.5 1007.0,317.0" fill="none" stroke="#add8e6" stroke-width="1"/></svg>
<div class="t" style="left:904px;top:292px;font-size:8.5px;color:#add8e6;font-weight:bold;">DELAY</div>
<div class="t" style="left:904px;top:301px;font-size:8.5px;color:#ffff00;font-weight:bold;">RMS</div>
<div style="left:879px;top:332px;width:18px;height:19px;background:#505050;border-top:1px solid #a6a6a6;border-left:1px solid #a6a6a6;border-right:1px solid #404040;border-bottom:1px solid #404040;box-sizing:border-box;"></div>
<div class="t" style="left:879px;width:18px;text-align:center;top:336px;font-size:12px;color:#c6c6c6;font-weight:normal;">+</div>
<div style="left:897px;top:332px;width:19px;height:19px;background:#505050;border-top:1px solid #a6a6a6;border-left:1px solid #a6a6a6;border-right:1px solid #404040;border-bottom:1px solid #404040;box-sizing:border-box;"></div>
<div class="t" style="left:897px;width:19px;text-align:center;top:336px;font-size:12px;color:#c6c6c6;font-weight:normal;">-</div>
<div style="left:916px;top:332px;width:120px;height:19px;background:#505050;border-top:1px solid #a6a6a6;border-left:1px solid #a6a6a6;border-right:1px solid #404040;border-bottom:1px solid #404040;box-sizing:border-box;"></div>
<div class="t" style="left:913px;width:120px;text-align:center;top:336px;font-size:12px;color:#c6c6c6;font-weight:normal;">Reset</div>
<div style="left:879px;top:351px;width:49px;height:19px;background:#505050;border-top:1px solid #a6a6a6;border-left:1px solid #a6a6a6;border-right:1px solid #404040;border-bottom:1px solid #404040;box-sizing:border-box;"></div>
<div class="t" style="left:879px;width:49px;text-align:center;top:355px;font-size:12px;color:#c6c6c6;font-weight:normal;">Info</div>
<div style="left:928px;top:351px;width:62px;height:19px;background:#505050;border-top:1px solid #a6a6a6;border-left:1px solid #a6a6a6;border-right:1px solid #404040;border-bottom:1px solid #404040;box-sizing:border-box;"></div>
<div class="t" style="left:928px;width:62px;text-align:center;top:355px;font-size:12px;color:#c6c6c6;font-weight:normal;">Status</div>
<div style="left:990px;top:351px;width:46px;height:19px;background:#505050;border-bottom:1px solid #a6a6a6;border-right:1px solid #a6a6a6;border-top:1px solid #404040;border-left:1px solid #404040;box-sizing:border-box;"></div>
<div class="t" style="left:990px;width:46px;text-align:center;top:355px;font-size:12px;color:#c6c6c6;font-weight:normal;">Ext</div>
<div style="left:879px;top:370px;width:54px;height:19px;background:#1c1c1c;border:1px solid #8c8c8c;box-sizing:border-box"></div>
<div class="t" style="left:880px;top:373px;width:52px;overflow:hidden;font-size:12px;color:#8a8a8a">feed</div>
<div style="left:933px;top:370px;width:103px;height:19px;background:#1c1c1c;border:1px solid #8c8c8c;box-sizing:border-box"></div>
<div class="t" style="right:15px;top:372px;font-size:11.75px;color:#8a8a8a;font-weight:normal;">6</div>
<div style="left:879px;top:389px;width:54px;height:19px;background:#1c1c1c;border:1px solid #8c8c8c;box-sizing:border-box"></div>
<div class="t" style="left:880px;top:392px;width:52px;overflow:hidden;font-size:12px;color:#8a8a8a">seq_no</div>
<div style="left:933px;top:389px;width:103px;height:19px;background:#1c1c1c;border:1px solid #8c8c8c;box-sizing:border-box"></div>
<div class="t" style="right:15px;top:391px;font-size:11.75px;color:#8a8a8a;font-weight:normal;">11633</div>
<div style="left:879px;top:408px;width:54px;height:19px;background:#1c1c1c;border:1px solid #8c8c8c;box-sizing:border-box"></div>
<div class="t" style="left:880px;top:411px;width:52px;overflow:hidden;font-size:12px;color:#8a8a8a">received</div>
<div style="left:933px;top:408px;width:103px;height:19px;background:#1c1c1c;border:1px solid #8c8c8c;box-sizing:border-box"></div>
<div class="t" style="right:15px;top:410px;font-size:11.75px;color:#8a8a8a;font-weight:normal;">19091604</div>
<div style="left:879px;top:427px;width:54px;height:19px;background:#1c1c1c;border:1px solid #8c8c8c;box-sizing:border-box"></div>
<div class="t" style="left:880px;top:430px;width:52px;overflow:hidden;font-size:12px;color:#8a8a8a">silence</div>
<div style="left:933px;top:427px;width:103px;height:19px;background:#1c1c1c;border:1px solid #8c8c8c;box-sizing:border-box"></div>
<div class="t" style="right:15px;top:429px;font-size:11.75px;color:#8a8a8a;font-weight:normal;">2205</div>
<div style="left:879px;top:446px;width:54px;height:19px;background:#1c1c1c;border:1px solid #8c8c8c;box-sizing:border-box"></div>
<div class="t" style="left:880px;top:449px;width:52px;overflow:hidden;font-size:12px;color:#8a8a8a">dropped</div>
<div style="left:933px;top:446px;width:103px;height:19px;background:#1c1c1c;border:1px solid #8c8c8c;box-sizing:border-box"></div>
<div class="t" style="right:15px;top:448px;font-size:11.75px;color:#8a8a8a;font-weight:normal;">89964</div>
<div style="left:879px;top:465px;width:54px;height:19px;background:#1c1c1c;border:1px solid #8c8c8c;box-sizing:border-box"></div>
<div class="t" style="left:880px;top:468px;width:52px;overflow:hidden;font-size:12px;color:#8a8a8a">clipped</div>
<div style="left:933px;top:465px;width:103px;height:19px;background:#1c1c1c;border:1px solid #8c8c8c;box-sizing:border-box"></div>
<div class="t" style="right:15px;top:467px;font-size:11.75px;color:#8a8a8a;font-weight:normal;">0</div>
<div style="left:879px;top:484px;width:54px;height:19px;background:#1c1c1c;border:1px solid #8c8c8c;box-sizing:border-box"></div>
<div class="t" style="left:880px;top:487px;width:52px;overflow:hidden;font-size:12px;color:#8a8a8a">delay</div>
<div style="left:933px;top:484px;width:103px;height:19px;background:#1c1c1c;border:1px solid #8c8c8c;box-sizing:border-box"></div>
<div class="t" style="right:15px;top:486px;font-size:11.75px;color:#8a8a8a;font-weight:normal;">177</div>
<div style="left:879px;top:503px;width:54px;height:19px;background:#1c1c1c;border:1px solid #8c8c8c;box-sizing:border-box"></div>
<div class="t" style="left:880px;top:506px;width:52px;overflow:hidden;font-size:12px;color:#8a8a8a">rms</div>
<div style="left:933px;top:503px;width:103px;height:19px;background:#1c1c1c;border:1px solid #8c8c8c;box-sizing:border-box"></div>
<div class="t" style="right:15px;top:505px;font-size:11.75px;color:#8a8a8a;font-weight:normal;">0.3</div>
<div style="left:3px;top:539px;width:1043px;height:2px;background:#474747"></div>
<div style="left:3px;top:541px;width:1043px;height:17px;background:#fafafa"></div>
<div style="left:4px;top:545px;width:883px;height:8px;border-radius:4px;background:#c2c2c2"></div>
</body></html>
